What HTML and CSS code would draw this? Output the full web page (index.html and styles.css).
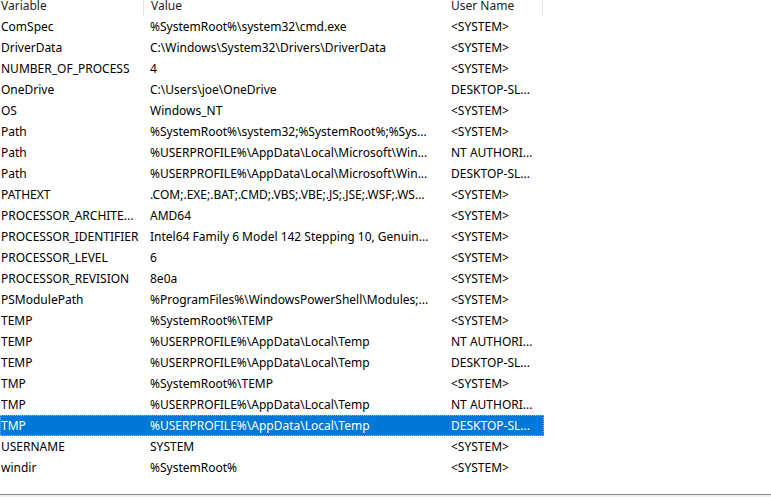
FILE: index.html
```html
<!DOCTYPE html>
<html lang="en">

<head>
    <meta charset="UTF-8">
    <title>Environment Variables</title>
    <link rel="stylesheet" href="styles.css">
</head>

<body>

    <div class="listview">
        <!-- Cabeçalho das colunas -->
        <div class="row header">
            <div class="cell">Variable</div>
            <div class="cell">Value</div>
            <div class="cell">User Name</div>
            <div class="cell filler"></div>
        </div>

        <div class="row"><div class="cell">ComSpec</div><div class="cell">%SystemRoot%\system32\cmd.exe</div><div class="cell">&lt;SYSTEM&gt;</div></div>
        <div class="row"><div class="cell">DriverData</div><div class="cell">C:\Windows\System32\Drivers\DriverData</div><div class="cell">&lt;SYSTEM&gt;</div></div>
        <div class="row"><div class="cell">NUMBER_OF_PROCESS</div><div class="cell">4</div><div class="cell">&lt;SYSTEM&gt;</div></div>
        <div class="row"><div class="cell">OneDrive</div><div class="cell">C:\Users\joe\OneDrive</div><div class="cell">DESKTOP-SL...</div></div>
        <div class="row"><div class="cell">OS</div><div class="cell">Windows_NT</div><div class="cell">&lt;SYSTEM&gt;</div></div>
        <div class="row"><div class="cell">Path</div><div class="cell">%SystemRoot%\system32;%SystemRoot%;%Sys...</div><div class="cell">&lt;SYSTEM&gt;</div></div>
        <div class="row"><div class="cell">Path</div><div class="cell">%USERPROFILE%\AppData\Local\Microsoft\Win...</div><div class="cell">NT AUTHORI...</div></div>
        <div class="row"><div class="cell">Path</div><div class="cell">%USERPROFILE%\AppData\Local\Microsoft\Win...</div><div class="cell">DESKTOP-SL...</div></div>
        <div class="row"><div class="cell">PATHEXT</div><div class="cell">.COM;.EXE;.BAT;.CMD;.VBS;.VBE;.JS;.JSE;.WSF;.WS...</div><div class="cell">&lt;SYSTEM&gt;</div></div>
        <div class="row"><div class="cell">PROCESSOR_ARCHITE...</div><div class="cell">AMD64</div><div class="cell">&lt;SYSTEM&gt;</div></div>
        <div class="row"><div class="cell">PROCESSOR_IDENTIFIER</div><div class="cell">Intel64 Family 6 Model 142 Stepping 10, Genuin...</div><div class="cell">&lt;SYSTEM&gt;</div></div>
        <div class="row"><div class="cell">PROCESSOR_LEVEL</div><div class="cell">6</div><div class="cell">&lt;SYSTEM&gt;</div></div>
        <div class="row"><div class="cell">PROCESSOR_REVISION</div><div class="cell">8e0a</div><div class="cell">&lt;SYSTEM&gt;</div></div>
        <div class="row"><div class="cell">PSModulePath</div><div class="cell">%ProgramFiles%\WindowsPowerShell\Modules;...</div><div class="cell">&lt;SYSTEM&gt;</div></div>
        <div class="row"><div class="cell">TEMP</div><div class="cell">%SystemRoot%\TEMP</div><div class="cell">&lt;SYSTEM&gt;</div></div>
        <div class="row"><div class="cell">TEMP</div><div class="cell">%USERPROFILE%\AppData\Local\Temp</div><div class="cell">NT AUTHORI...</div></div>
        <div class="row"><div class="cell">TEMP</div><div class="cell">%USERPROFILE%\AppData\Local\Temp</div><div class="cell">DESKTOP-SL...</div></div>
        <div class="row"><div class="cell">TMP</div><div class="cell">%SystemRoot%\TEMP</div><div class="cell">&lt;SYSTEM&gt;</div></div>
        <div class="row"><div class="cell">TMP</div><div class="cell">%USERPROFILE%\AppData\Local\Temp</div><div class="cell">NT AUTHORI...</div></div>
        <div class="row selected"><div class="cell">TMP</div><div class="cell">%USERPROFILE%\AppData\Local\Temp</div><div class="cell">DESKTOP-SL...</div></div>
        <div class="row"><div class="cell">USERNAME</div><div class="cell">SYSTEM</div><div class="cell">&lt;SYSTEM&gt;</div></div>
        <div class="row"><div class="cell">windir</div><div class="cell">%SystemRoot%</div><div class="cell">&lt;SYSTEM&gt;</div></div>
    </div>

    <div class="statusbar"></div>

</body>

</html>
```

FILE: styles.css
```css
/* Reset básico */
* {
    margin: 0;
    padding: 0;
    box-sizing: border-box;
}

body {
    background: #fff;
    font-family: "Noto Sans", "Open Sans", sans-serif;
    font-size: 12px;
    color: #000;
    overflow: hidden;
}

/* Lista de variáveis */
.listview {
    height: 495px;
    border-bottom: 1px solid #828790;
}

.row {
    display: grid;
    grid-template-columns: 143px 300px 101px;
    width: 544px;
    height: 21px;
    line-height: 20px;
}

.cell {
    white-space: nowrap;
    overflow: hidden;
    padding-top: 1px;
    padding-left: 7px;
}

.cell:first-child {
    padding-left: 1px;
}

.cell:nth-child(3) {
    padding-left: 8px;
}

/* Cabeçalho cortado no topo */
.header {
    grid-template-columns: 143px 300px 100px 1px;
    height: 16px;
    line-height: 11px;
    color: #1e1e1e;
}

.header .cell {
    overflow: visible;
    padding-top: 0;
    border-right: 1px solid #e5e5e5;
}

.header .cell:first-child {
    border-right: none;
}

.header .cell:nth-child(2) {
    border-left: 1px solid #e5e5e5;
    border-right: none;
}

.header .filler {
    padding: 0;
    border-right: none;
}

/* Linha selecionada */
.selected {
    background: #0078d7;
    color: #fff;
    outline: 1px dotted #e8a04a;
    outline-offset: -1px;
}

/* Barra inferior */
.statusbar {
    height: 2px;
    background: #f0f0f0;
}
```
